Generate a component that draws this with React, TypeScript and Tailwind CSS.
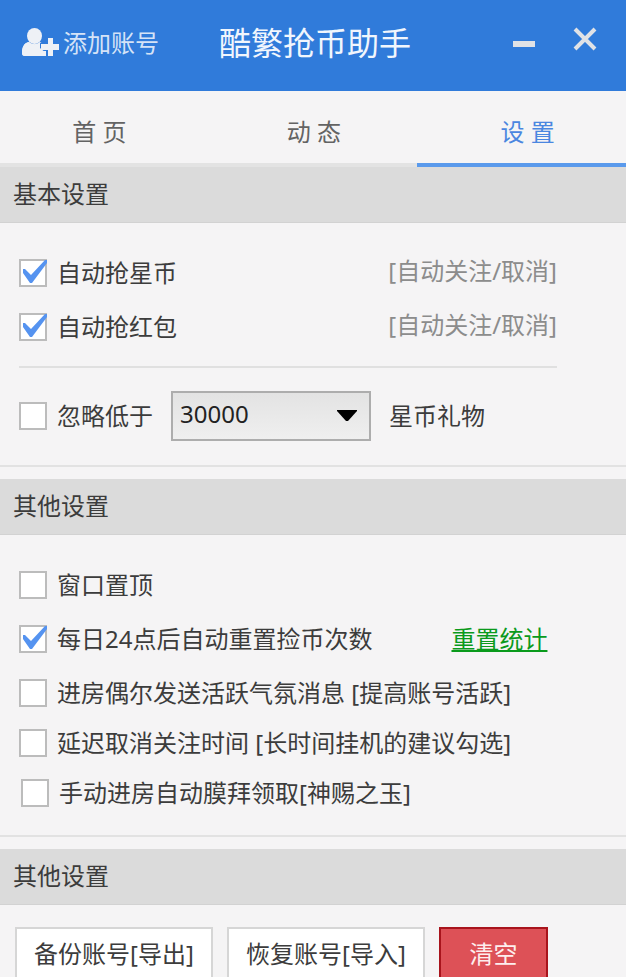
import React, { useState } from 'react'

const tabs = [
  { label: '首 页', pad: 'pr-2.5' },
  { label: '动 态', pad: 'pl-0.5' },
  { label: '设 置', pad: 'pl-3' },
]

function SectionTitle({ children }: { children: React.ReactNode }) {
  return (
    <h2 className="h-14 px-[13px] bg-[#dbdbdb] border-b border-[#d2d2d2] text-[#3c3c3c] leading-[53px]">{children}</h2>
  )
}

function CheckItem({ label, defaultChecked = false }: { label: string; defaultChecked?: boolean }) {
  return (
    <label className="flex items-center gap-2.5 text-[#3c3c3c]">
      <span className="relative w-7 h-7 shrink-0">
        <input
          type="checkbox"
          defaultChecked={defaultChecked}
          className="peer block appearance-none w-7 h-7 bg-white border-2 border-[#bcbcbc]"
        />
        <svg viewBox="0 0 28 28" className="absolute inset-0 hidden peer-checked:block pointer-events-none">
          <path d="M4 10 L6 10 L12 16 L26 1 L28 1 L28 4 L13 24 L11 24 L4 14 Z" fill="#5593f0" />
        </svg>
      </span>
      <span>{label}</span>
    </label>
  )
}

function UserPlusIcon() {
  return (
    <svg width="37" height="29" viewBox="0 0 37 29" fill="#eef1f6">
      <ellipse cx="12.5" cy="8" rx="7.500" ry="8" />
      <path d="M0 25 C0 19 2 15 7 14 C10 17 15 17 18 14 L24 18 V28 H3 Q0 28 0 25 Z" />
      <path d="M25 9 H33 V15 H37 V23 H33 V29 H25 V23 H18 V15 H25 Z" fill="#307bda" />
      <path d="M0 25 C0 19 2 15 7 14 C10 17 15 17 18 14 V20 L24 25 V28 H3 Q0 28 0 25 Z" />
      <path d="M26 10 H31 V16 H37 V22 H31 V28 H26 V22 H19 V16 H26 Z" />
    </svg>
  )
}

export default function App() {
  const [active, setActive] = useState(2)

  return (
    <div className="h-screen overflow-hidden bg-[#f5f4f5] text-2xl leading-8 font-['Noto_Sans','Noto_Sans_CJK_SC',sans-serif]">
      <header className="flex items-center h-[91px] pl-[22px] pr-[29px] pb-1.5 bg-[#307bda]">
        <button className="flex items-center gap-1 text-[#d5e3f7]">
          <UserPlusIcon />
          添加账号
        </button>
        <h1 className="ml-[60px] text-[32px] text-[#f1f6fd]">酷繁抢币助手</h1>
        <div className="flex items-center gap-[38px] ml-auto pb-2">
          <button aria-label="最小化" className="pt-2.5">
            <svg width="22" height="6" viewBox="0 0 22 6" className="block">
              <rect width="22" height="6" fill="#e0e2e6" />
            </svg>
          </button>
          <button aria-label="关闭">
            <svg width="24" height="24" viewBox="0 0 24 24" className="block" stroke="#e0e2e6" strokeWidth="4">
              <path d="M2 2 L22 22 M22 2 L2 22" />
            </svg>
          </button>
        </div>
      </header>

      <nav className="grid grid-cols-3 h-[76px]">
        {tabs.map((tab, i) => (
          <button
            key={tab.label}
            onClick={() => setActive(i)}
            className={`${tab.pad} pt-2.5 border-b-4 ${
              i === active ? 'text-[#4a86e0] border-[#5a9aec]' : 'text-[#636363] border-[#e3e3e3]'
            }`}
          >
            {tab.label}
          </button>
        ))}
      </nav>

      <section>
        <SectionTitle>基本设置</SectionTitle>
        <div className="px-[19px] pt-[25px] pb-6 border-b-2 border-[#e2e2e2]">
          <div className="max-w-[538px] pb-2.5 border-b-2 border-[#e0e0e0]">
            {['自动抢星币', '自动抢红包'].map((label) => (
              <div key={label} className="flex items-center justify-between h-[54px] pt-2 pb-3">
                <CheckItem label={label} defaultChecked />
                <button className="pb-1 text-[#8c8c8c]">[自动关注/取消]</button>
              </div>
            ))}
          </div>
          <div className="flex items-center pt-[23px]">
            <CheckItem label="忽略低于" />
            <div className="relative ml-[18px]">
              <select
                aria-label="星币数量"
                className="block appearance-none w-[200px] h-[50px] pl-[7px] pb-1 border-2 border-[#adadad] bg-linear-to-b from-[#e3e3e3] to-[#efefef] text-[#222]"
              >
                <option>30000</option>
                <option>50000</option>
                <option>100000</option>
              </select>
              <svg
                width="20"
                height="12"
                viewBox="0 0 20 12"
                className="absolute right-3.5 top-[19px] pointer-events-none"
              >
                <path d="M0 0 H20 V1 L11 11 H9 L0 1 Z" fill="#000" />
              </svg>
            </div>
            <span className="ml-[18px] text-[#3c3c3c]">星币礼物</span>
          </div>
        </div>
      </section>

      <section className="mt-3">
        <SectionTitle>其他设置</SectionTitle>
        <div className="px-[19px] pt-[34px] pb-[26px] border-b-2 border-[#e2e2e2]">
          <div className="flex flex-col gap-[22px]">
            <CheckItem label="窗口置顶" />
            <div className="flex items-center gap-[79px]">
              <CheckItem label="每日24点后自动重置捡币次数" defaultChecked />
              <a href="#reset" className="text-[#0a9a1c] underline underline-offset-2 decoration-2">
                重置统计
              </a>
            </div>
            <CheckItem label="进房偶尔发送活跃气氛消息 [提高账号活跃]" />
          </div>
          <div className="flex flex-col gap-[18px] mt-[18px]">
            <CheckItem label="延迟取消关注时间 [长时间挂机的建议勾选]" />
            <div className="pl-0.5">
              <CheckItem label="手动进房自动膜拜领取[神赐之玉]" />
            </div>
          </div>
        </div>
      </section>

      <section className="mt-3">
        <SectionTitle>其他设置</SectionTitle>
        <div className="flex gap-3.5 px-[15px] pt-[22px] pb-6 text-[#3c3c3c]">
          <button className="w-[198px] h-[54px] bg-white border-2 border-[#d6d6d6]">备份账号[导出]</button>
          <button className="w-[198px] h-[54px] bg-white border-2 border-[#d6d6d6]">恢复账号[导入]</button>
          <button className="w-[109px] h-[54px] bg-[#dd5157] border-2 border-[#a8141c] text-[#fdeeee]">清空</button>
        </div>
      </section>
    </div>
  )
}
